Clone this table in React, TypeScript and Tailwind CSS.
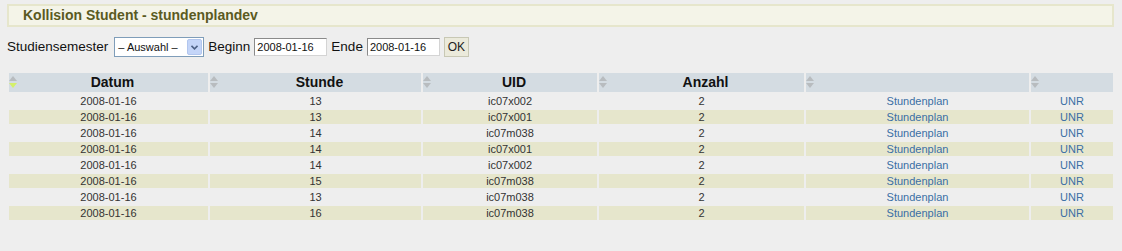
import React from "react";

const rows = [
  ["2008-01-16", "13", "ic07x002", "2"],
  ["2008-01-16", "13", "ic07x001", "2"],
  ["2008-01-16", "14", "ic07m038", "2"],
  ["2008-01-16", "14", "ic07x001", "2"],
  ["2008-01-16", "14", "ic07x002", "2"],
  ["2008-01-16", "15", "ic07m038", "2"],
  ["2008-01-16", "13", "ic07m038", "2"],
  ["2008-01-16", "16", "ic07m038", "2"],
];

function SortIcon({ active }: { active?: boolean }) {
  return (
    <svg width="8" height="13" viewBox="0 0 8 13" className="shrink-0">
      <polygon points="4,0 8,5 0,5" fill="#b8bcbf" />
      <polygon points="0,7 8,7 4,12" fill={active ? "#d4f06a" : "#b8bcbf"} />
    </svg>
  );
}

function Th({ label, w, active }: { label?: string; w: string; active?: boolean }) {
  return (
    <th className={`${w} h-[19px] bg-[#d4dce2] p-0 font-bold text-[14px] text-[#111]`}>
      <div className="flex items-center">
        <SortIcon active={active} />
        <span className="flex-1 text-center leading-[19px]">{label ?? "\u00a0"}</span>
      </div>
    </th>
  );
}

export default function App() {
  return (
    <div className="min-h-[251px] bg-[#eeeeee] px-[7px] pt-[4px] font-['Liberation_Sans',Arial,sans-serif]">
      <div className="w-[1107px] h-[23px] border-2 border-[#e6e6cc] bg-[#f4f4e8] pl-[14px] flex items-center">
        <h1 className="text-[14px] font-bold text-[#5a5a22]">Kollision Student - stundenplandev</h1>
      </div>

      <div className="mt-[10px] flex items-center gap-[4px] text-[13.5px] text-[#111] h-[20px]">
        <span className="mr-[2px]">Studiensemester</span>
        <div className="w-[90px] h-[20px] border border-[#7f9db9] bg-white flex items-center justify-between pl-[3px] pr-[1px]">
          <span className="text-[11px] text-[#111]">&ndash; Auswahl &ndash;</span>
          <div className="w-[15px] h-[16px] rounded-[2px] bg-[#c4d5f8] border border-[#b2c6ee] flex items-center justify-center">
            <svg width="7" height="5" viewBox="0 0 7 5">
              <polyline points="0.5,0.8 3.5,3.8 6.5,0.8" fill="none" stroke="#4d6185" strokeWidth="1.6" />
            </svg>
          </div>
        </div>
        <span>Beginn</span>
        <div className="w-[73px] h-[18px] border border-[#8a8a8a] border-b-[#d4d4d4] border-r-[#d4d4d4] bg-white pl-[2px] text-[11px] leading-[16px]">
          2008-01-16
        </div>
        <span>Ende</span>
        <div className="w-[73px] h-[18px] border border-[#8a8a8a] border-b-[#d4d4d4] border-r-[#d4d4d4] bg-white pl-[2px] text-[11px] leading-[16px]">
          2008-01-16
        </div>
        <button className="w-[25px] h-[20px] border border-[#c8c8b4] bg-[#ebeadb] text-[12px] text-[#222] leading-[18px]">
          OK
        </button>
      </div>

      <table className="mt-[14px] w-[1108px] table-fixed border-separate border-spacing-[2px]">
        <thead>
          <tr>
            <Th label="Datum" w="w-[199px]" active />
            <Th label="Stunde" w="w-[211px]" />
            <Th label="UID" w="w-[174px]" />
            <Th label="Anzahl" w="w-[205px]" />
            <Th w="w-[223px]" />
            <Th w="w-[82px]" />
          </tr>
        </thead>
        <tbody className="text-[11px] text-[#333]">
          {rows.map((r, i) => (
            <tr key={i} className={i % 2 === 1 ? "bg-[#e6e6cc]" : ""}>
              {r.map((c, j) => (
                <td key={j} className="h-[14px] p-0 text-center leading-[14px]">
                  {c}
                </td>
              ))}
              <td className="h-[14px] p-0 text-center leading-[14px] text-[#3a6ea5]">Stundenplan</td>
              <td className="h-[14px] p-0 text-center leading-[14px] text-[#3a6ea5]">UNR</td>
            </tr>
          ))}
        </tbody>
      </table>
    </div>
  );
}
